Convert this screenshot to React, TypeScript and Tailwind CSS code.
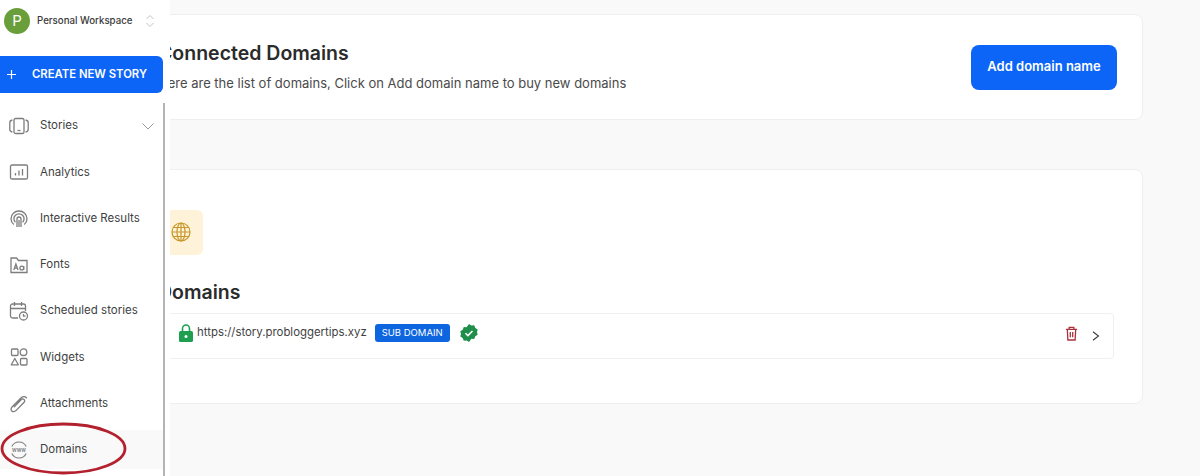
import React from 'react';

const navIcon = 'w-[20px] h-[20px] text-[#7d7d7d] shrink-0';

const StoriesIcon = () => (
  <svg viewBox="0 0 20 20" fill="none" stroke="currentColor" strokeWidth="1.300" className={navIcon}>
    <rect x="5" y="2.500" width="10" height="15" rx="1.600" />
    <path d="M8.500 14.500h3" />
    <path d="M3.400 4C1.800 4.300 .8 5 .8 6.500v7c0 1.500 1 2.200 2.600 2.500M16.600 4c1.600.3 2.600 1 2.600 2.500v7c0 1.500-1 2.200-2.600 2.500" />
  </svg>
);

const AnalyticsIcon = () => (
  <svg viewBox="0 0 20 20" fill="none" stroke="currentColor" strokeWidth="1.300" className={navIcon}>
    <rect x="1.500" y="3" width="17" height="14" rx="1.600" />
    <path d="M6.500 13.500v-2.500M10 13.500V8.500M13.500 13.500V7" />
  </svg>
);

const ResultsIcon = () => (
  <svg viewBox="0 0 20 20" fill="none" stroke="currentColor" strokeWidth="1.300" className={navIcon}>
    <path d="M4.800 15.500C2.900 14 2 12 2 9.800 2 5.400 5.600 2 10 2s8 3.400 8 7.800c0 2.200-.9 4.200-2.800 5.700" />
    <path d="M6.400 13.200C5.400 12.300 4.900 11.100 4.900 9.800c0-2.800 2.300-5 5.100-5s5.100 2.200 5.100 5c0 1.300-.5 2.500-1.500 3.400" />
    <path d="M8 18v-8a2 2 0 0 1 4 0v8M10 18v-7" />
  </svg>
);

const FontsIcon = () => (
  <svg viewBox="0 0 20 20" fill="none" stroke="currentColor" strokeWidth="1.300" className={navIcon}>
    <path d="M2 17.500V3h5.500l2 2.500H18v12z" />
    <path d="M4.800 15l2.100-6 2.100 6M5.500 13.200h2.800" />
    <circle cx="12.800" cy="13" r="1.900" />
    <path d="M14.700 11v4" />
  </svg>
);

const ScheduledIcon = () => (
  <svg viewBox="0 0 20 20" fill="none" stroke="currentColor" strokeWidth="1.300" className={navIcon}>
    <path d="M9 17H3.500A2 2 0 0 1 1.500 15V5a2 2 0 0 1 2-2h11a2 2 0 0 1 2 2v5" />
    <path d="M1.500 7.500h15M5.500 1v4M12.500 1v4" />
    <circle cx="14.500" cy="15" r="4" />
    <path d="M14.500 13v2.200h2" />
  </svg>
);

const WidgetsIcon = () => (
  <svg viewBox="0 0 20 20" fill="none" stroke="currentColor" strokeWidth="1.300" className={navIcon}>
    <rect x="2.500" y="2" width="6.500" height="6.500" rx="1" />
    <circle cx="14.500" cy="5.200" r="3.300" />
    <path d="M5.800 11.500L9.300 17.800H2.300z" strokeLinejoin="round" />
    <rect x="11.500" y="11.500" width="6.500" height="6.500" rx="1" />
  </svg>
);

const AttachIcon = () => (
  <svg viewBox="0 0 20 20" fill="none" stroke="currentColor" strokeWidth="1.300" strokeLinecap="round" className={navIcon}>
    <path d="M17.500 3.800c-1.500-1.700-3.800-1.600-5.300 0L3.500 12.500c-1.900 2-1.700 3.500-.7 4.500s2.700 1.100 4.400-.6l7.700-7.900c1-1 1-2.200.2-3s-2-.8-3 .2l-6.800 7" />
  </svg>
);

const WwwIcon = () => (
  <svg viewBox="0 0 20 20" fill="none" stroke="currentColor" strokeWidth="1.100" className={navIcon}>
    <path d="M2.800 6.500A8 8 0 0 1 17.200 6.500M2.800 13.500A8 8 0 0 0 17.200 13.500" />
    <text x="10" y="11.700" textAnchor="middle" fontSize="5.500" fontWeight="600" fill="currentColor" stroke="none" fontFamily="Inter, sans-serif">www</text>
  </svg>
);

const navItems = [
  { label: 'Stories', icon: <StoriesIcon />, chevron: true },
  { label: 'Analytics', icon: <AnalyticsIcon /> },
  { label: 'Interactive Results', icon: <ResultsIcon /> },
  { label: 'Fonts', icon: <FontsIcon /> },
  { label: 'Scheduled stories', icon: <ScheduledIcon /> },
  { label: 'Widgets', icon: <WidgetsIcon /> },
  { label: 'Attachments', icon: <AttachIcon /> },
  { label: 'Domains', icon: <WwwIcon />, active: true },
];

const Sidebar: React.FC = () => (
  <aside className="absolute left-0 top-0 z-10 h-full w-[170px] bg-white">
    <div className="flex h-[56px] items-start pl-[4px] pt-[8px]">
      <div className="flex h-[26px] w-[26px] items-center justify-center rounded-full bg-[#6a9e3a] text-[15px] text-white">P</div>
      <span className="ml-[7px] mt-[6px] text-[9.700px] font-medium leading-[14px] text-[#3a3a3a]">Personal Workspace</span>
      <svg viewBox="0 0 10 14" fill="none" stroke="#c4c4c4" strokeWidth="1" className="ml-[12px] mt-[6px] h-[14px] w-[10px]">
        <path d="M1.500 5L5 1.500 8.500 5M1.500 9L5 12.500 8.500 9" />
      </svg>
    </div>
    <button className="flex h-[37px] w-[163px] items-center rounded-r-[6px] bg-[#0d65f8] pl-[7px] text-white">
      <svg viewBox="0 0 10 10" fill="none" stroke="white" strokeWidth="1.300" className="h-[9px] w-[9px]">
        <path d="M5 0v10M0 5h10" />
      </svg>
      <span className="ml-[16px] text-[11.300px] font-semibold">CREATE NEW STORY</span>
    </button>
    <nav className="mt-[10px] flex h-[373px] w-[165px] flex-col gap-[7.250px] border-r-2 border-[#b4b4b4] pt-[3.500px]">
      {navItems.map((item) => (
        <div
          key={item.label}
          className={`flex h-[39px] shrink-0 items-center pl-[9px] pr-[9px] ${item.active ? 'bg-[#f9f9f9]' : ''}`}
        >
          {item.icon}
          <span className="ml-[11px] text-[11.500px] text-[#3f3f3f]">{item.label}</span>
          {item.chevron && (
            <svg viewBox="0 0 12 7" fill="none" stroke="#9a9a9a" strokeWidth="1" className="ml-auto h-[7px] w-[12px]">
              <path d="M.5 .5L6 6l5.500-5.500" />
            </svg>
          )}
        </div>
      ))}
    </nav>
    {/* red marker drawn over the screenshot */}
    <svg viewBox="0 0 130 56" fill="none" className="absolute left-0 top-[421px] h-[56px] w-[130px]">
      <ellipse cx="63.500" cy="27.500" rx="61.500" ry="24.500" stroke="#b3202e" strokeWidth="2.800" />
    </svg>
  </aside>
);

const App: React.FC = () => (
  <div className="relative h-[476px] w-[1200px] overflow-hidden bg-[#f9f9f9] font-['Inter',sans-serif]">
    <Sidebar />
    <main className="ml-[130px] flex w-[1013px] flex-col gap-[49px] pt-[14px]">
      <section className="flex h-[106px] items-center justify-between rounded-[8px] border border-[#efefef] bg-white pl-[27px] pr-[25px]">
        <div className="-mt-[2px]">
          <h1 className="text-[19.500px] font-semibold leading-[28px] text-[#2b2b2b]">Connected Domains</h1>
          <p className="mt-[6px] text-[13px] leading-[20px] text-[#4a4a4a]">
            Here are the list of domains, Click on Add domain name to buy new domains
          </p>
        </div>
        <button className="h-[45px] w-[146px] rounded-[8px] bg-[#0d65f8] text-[13px] font-semibold text-white">
          Add domain name
        </button>
      </section>

      <section className="h-[235px] rounded-[8px] border border-[#efefef] bg-white pl-[27px] pr-[28px] pt-[40px]">
        <div className="flex h-[45px] w-[45px] items-center justify-center rounded-[6px] bg-[#fef3d8] pb-[2px]">
          <svg viewBox="0 0 20 20" fill="none" stroke="#c8962a" strokeWidth="1.200" className="h-[20px] w-[20px]">
            <circle cx="10" cy="10" r="9" />
            <ellipse cx="10" cy="10" rx="4" ry="9" />
            <path d="M10 1v18M1 10h18M2.300 5.500h15.400M2.300 14.500h15.400" />
          </svg>
        </div>
        <h2 className="mt-[23px] text-[19.500px] font-semibold leading-[28px] text-[#2b2b2b]">Domains</h2>
        <div className="mt-[7px] flex h-[46px] items-center rounded-[4px] border border-[#f0f0f0] pb-[6px] pl-[20px] pr-[13px]">
          <svg viewBox="0 0 14 18" className="h-[18px] w-[14px]">
            <path d="M3.500 8V4.500a3.500 3.500 0 0 1 7 0V8" fill="none" stroke="#1e9e4f" strokeWidth="1.600" />
            <rect x="0" y="7" width="14" height="11" rx="1.600" fill="#1e9e4f" />
            <circle cx="7" cy="12.500" r="1.500" fill="white" />
          </svg>
          <span className="ml-[4px] text-[11.400px] text-[#3f3f3f]">https://story.probloggertips.xyz</span>
          <span className="ml-[8px] flex h-[18px] w-[75px] items-center justify-center rounded-[3px] bg-[#0d65e0] text-[9.500px] text-white">
            SUB DOMAIN
          </span>
          <svg viewBox="0 0 18 18" className="ml-[10px] h-[18px] w-[18px]">
            <path
              d="M9 0l2.400 1.500 2.800-.2 1.100 2.600 2.400 1.500-.7 2.700.7 2.700-2.400 1.500-1.100 2.600-2.800-.2L9 18l-2.400-1.500-2.800.2-1.100-2.600L.3 12.600 1 9.900.3 7.200l2.400-1.500 1.100-2.600 2.800.2z"
              fill="#1e8e4a"
            />
            <path d="M5.500 9.200l2.400 2.400 4.600-4.600" fill="none" stroke="white" strokeWidth="1.600" />
          </svg>
          <svg viewBox="0 0 14 16" fill="none" stroke="#a8323c" strokeWidth="1.400" className="ml-auto h-[15px] w-[13px]">
            <path d="M1 3.500h12M4.500 3.500V1.500h5v2M2.500 3.500l.6 11.500h7.800l.6-11.500M5.700 6.500v5.500M8.300 6.500v5.500" />
          </svg>
          <svg viewBox="0 0 8 10" fill="none" stroke="#3a3a3a" strokeWidth="1.100" className="ml-[14px] mt-[6px] h-[10px] w-[8px]">
            <path d="M1 .8L6.500 5 1 9.200" />
          </svg>
        </div>
      </section>
    </main>
  </div>
);

export default App;
